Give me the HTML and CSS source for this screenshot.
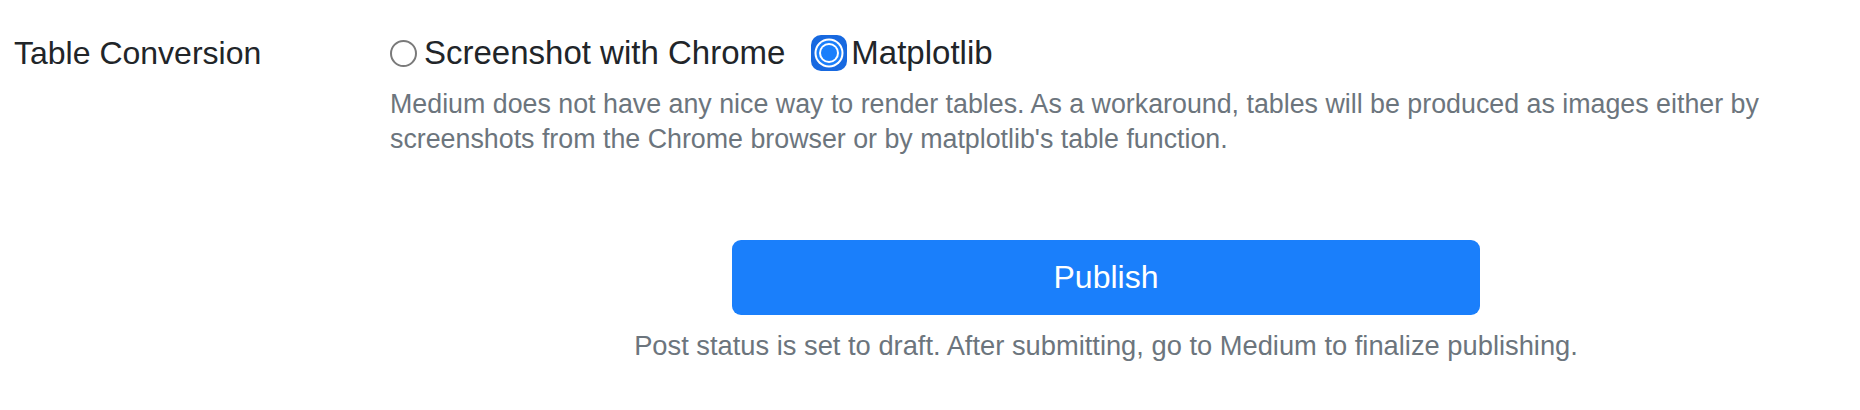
FILE: index.html
```html
<!DOCTYPE html>
<html lang="en">
<head>
<meta charset="utf-8">
<title>Table Conversion</title>
<link rel="stylesheet" href="styles.css">
</head>
<body>
<div class="form-row">
  <div class="label">Table Conversion</div>
  <div class="field">
    <div class="options">
      <label class="option"><span class="radio"></span><span class="option-text">Screenshot with Chrome</span></label>
      <label class="option option-checked"><svg class="radio-checked" width="36" height="36" viewBox="0 0 36 36"><rect x="0" y="0" width="36" height="36" rx="10" fill="#1769e0"/><circle cx="18" cy="18" r="14.5" fill="#ffffff"/><circle cx="18" cy="18" r="12.5" fill="#1a7ffb"/><circle cx="18" cy="18" r="10" fill="#ffffff"/><circle cx="18" cy="18" r="8" fill="#1a7ffb"/></svg><span class="option-text">Matplotlib</span></label>
    </div>
    <p class="help">Medium does not have any nice way to render tables. As a workaround, tables will be produced as images either by screenshots from the Chrome browser or by matplotlib's table function.</p>
  </div>
</div>
<div class="submit-row">
  <div class="submit">
    <button class="publish" type="button">Publish</button>
    <p class="note">Post status is set to draft. After submitting, go to Medium to finalize publishing.</p>
  </div>
</div>
</body>
</html>
```

FILE: styles.css
```css
html, body {
  margin: 0;
  padding: 0;
  background: #ffffff;
}
body {
  font-family: "Liberation Sans", Arial, sans-serif;
  color: #212529;
}
.form-row {
  display: flex;
  padding: 33px 0 0 14px;
}
.label {
  width: 376px;
  flex: none;
  font-size: 32px;
  line-height: 40px;
}
.field {
  width: 1432px;
  flex: none;
}
.options {
  display: flex;
  align-items: center;
  gap: 26px;
  height: 40px;
}
.option {
  display: inline-flex;
  align-items: center;
  font-size: 33px;
  line-height: 40px;
}
.radio {
  display: inline-block;
  box-sizing: border-box;
  width: 27px;
  height: 27px;
  border: 2px solid #7a7a7a;
  border-radius: 50%;
  background: #ffffff;
  margin-right: 7px;
}
.radio-checked {
  display: block;
  flex: none;
  margin-right: 4px;
}
.help {
  margin: 14px 0 0;
  font-size: 26.8px;
  line-height: 35px;
  color: #6c757d;
}
.submit-row {
  display: flex;
  padding: 83px 0 0 390px;
}
.submit {
  width: 1432px;
  display: flex;
  flex-direction: column;
  align-items: center;
}
.publish {
  width: 748px;
  height: 75px;
  border: none;
  border-radius: 9px;
  background: #1a7ffb;
  color: #ffffff;
  font-family: "Liberation Sans", Arial, sans-serif;
  font-size: 32px;
  padding: 0;
}
.note {
  margin: 13px 0 0;
  font-size: 27.3px;
  line-height: 35px;
  color: #6c757d;
}
```
